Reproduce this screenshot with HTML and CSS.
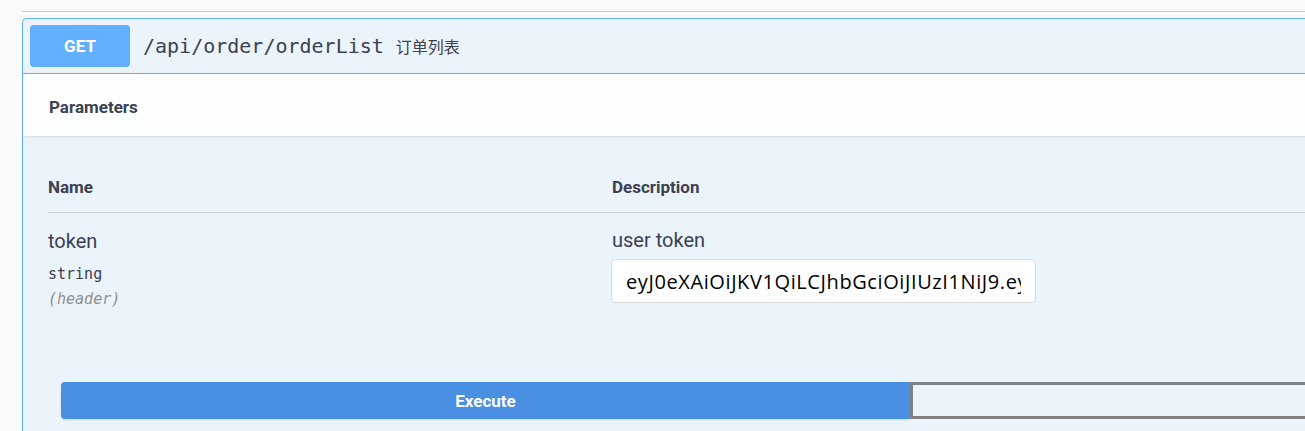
FILE: index.html
```html
<!DOCTYPE html>
<html>
<head>
<meta charset="utf-8">
<link rel="stylesheet" href="styles.css">
</head>
<body>
<div class="page">
  <div class="topline"></div>
  <div class="opblock">
    <div class="summary">
      <span class="method">GET</span>
      <span class="path">/api/order/orderList</span>
      <span class="summary-desc">订单列表</span>
    </div>
    <div class="section-header">
      <h4 class="section-title">Parameters</h4>
    </div>
    <div class="params">
      <div class="params-head">
        <div class="col-name">Name</div>
        <div class="col-desc">Description</div>
      </div>
      <div class="param-row">
        <div class="col-name">
          <div class="param-name">token</div>
          <div class="param-type">string</div>
          <div class="param-in">(header)</div>
        </div>
        <div class="col-desc">
          <div class="param-doc">user token</div>
          <input class="param-input" type="text" value="eyJ0eXAiOiJKV1QiLCJhbGciOiJIUzI1NiJ9.eyJ1aWQiOjEsImV4cCI6MTYwMDAwMDAwMH0">
        </div>
      </div>
    </div>
    <div class="execute-wrapper">
      <button class="btn-execute">Execute</button>
      <button class="btn-clear"></button>
    </div>
  </div>
</div>
</body>
</html>
```
FILE: styles.css
```css
html, body {
  margin: 0;
  padding: 0;
  background: #fafafa;
  overflow: hidden;
}
.page {
  width: 1400px;
  padding-left: 22px;
  font-family: Roboto, "Noto Sans", sans-serif;
  color: #3b4151;
}
.topline {
  height: 11px;
  border-bottom: 1px solid #c9c9c9;
}
.opblock {
  margin-top: 6px;
  border: 1px solid #61affe;
  border-right: none;
  border-radius: 5px 0 0 5px;
  background: #ebf3fb;
  height: 430px;
}
.summary {
  display: flex;
  align-items: center;
  padding: 6px 7px;
  border-bottom: 1px solid #61affe;
}
.method {
  width: 100px;
  height: 42px;
  border-radius: 4px;
  background: #61affe;
  color: #fff;
  font-weight: 700;
  font-size: 17px;
  display: flex;
  align-items: center;
  justify-content: center;
}
.path {
  margin-left: 13px;
  font-family: "DejaVu Sans Mono", monospace;
  font-size: 20px;
  font-weight: 400;
  color: #3b4151;
}
.summary-desc {
  margin-left: 12px;
  font-family: "Noto Sans CJK SC", sans-serif;
  font-size: 16px;
  color: #3b4151;
}
.section-header {
  height: 62px;
  display: flex;
  align-items: center;
  padding-left: 26px;
  padding-top: 4px;
  box-sizing: border-box;
  background: rgba(255,255,255,.85);
  box-shadow: 0 1px 2px rgba(0,0,0,.1);
}
.section-title {
  margin: 0;
  font-size: 17px;
  font-weight: 700;
}
.params {
  padding-left: 25px;
}
.params-head {
  display: flex;
  padding-top: 42px;
  padding-bottom: 16px;
  line-height: 18px;
  font-size: 17px;
  font-weight: 700;
  border-bottom: 1px solid rgba(59,65,81,.2);
}
.col-name {
  width: 564px;
}
.col-desc {
  flex: 1;
}
.param-row {
  display: flex;
  padding-top: 16px;
}
.param-name {
  font-size: 20px;
  line-height: 24px;
}
.param-type {
  margin-top: 12px;
  font-family: "DejaVu Sans Mono", monospace;
  font-size: 15px;
  line-height: 18px;
}
.param-in {
  margin-top: 7px;
  font-family: "DejaVu Sans Mono", monospace;
  font-size: 15px;
  line-height: 18px;
  font-style: italic;
  color: #909090;
}
.param-doc {
  margin-top: -1px;
  font-size: 20px;
  line-height: 24px;
}
.param-input {
  display: block;
  box-sizing: border-box;
  margin-top: 7px;
  margin-left: -1px;
  width: 425px;
  height: 44px;
  padding: 0 14px;
  border: 1px solid #d9d9d9;
  border-radius: 4px;
  background: #fff;
  font-family: "Open Sans", sans-serif;
  font-size: 20px;
  letter-spacing: 0.6px;
  color: #000;
  outline: none;
}
.execute-wrapper {
  display: flex;
  padding-left: 38px;
  margin-top: 74px;
}
.btn-execute,
.btn-clear {
  width: 849px;
  height: 37px;
  flex: none;
  margin: 0;
  font-family: Roboto, sans-serif;
  font-size: 17px;
  font-weight: 700;
}
.btn-execute {
  border: none;
  border-radius: 4px 0 0 4px;
  background: #4990e2;
  color: #fff;
  box-shadow: 0 1px 2px rgba(0,0,0,.1);
}
.btn-clear {
  border: 3px solid #808080;
  background: transparent;
  box-sizing: border-box;
}
```
